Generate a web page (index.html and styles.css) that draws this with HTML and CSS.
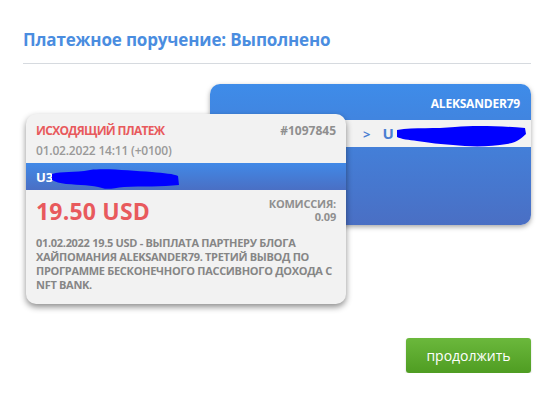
FILE: index.html
```html
<!DOCTYPE html>
<html lang="ru">
<head>
<meta charset="utf-8">
<title>Платежное поручение</title>
<link rel="stylesheet" href="styles.css">
</head>
<body>

<div id="page">
	<h1 class="page-title">Платежное поручение: Выполнено</h1>

	<div class="deck">
		<div class="card card-back">
			<div class="card-back-head">ALEKSANDER79</div>
			<div class="card-back-strip">
				<span class="arrow">&gt;</span>U
				<svg class="scribble scribble-back" width="132" height="24" viewBox="0 0 132 24">
					<path d="M2 6 C20 3 40 5 60 3 C80 1 105 2 130 4 L131 10 C126 14 124 18 112 20 C95 23 75 23 58 21 C45 20 35 19 22 17 C14 16 6 15 2 13 Z" fill="#0000ff"/>
				</svg>
			</div>
		</div>

		<div class="card card-front">
			<div class="row">
				<span class="kind">ИСХОДЯЩИЙ ПЛАТЕЖ</span>
				<span class="num">#1097845</span>
			</div>
			<div class="date">01.02.2022 14:11 (+0100)</div>
			<div class="card-bar">
				U3
				<svg class="scribble scribble-front" width="128" height="22" viewBox="0 0 128 22">
					<path d="M0 6 C10 3 22 5 38 2 C55 0 80 3 100 4 C112 5 122 6 126 8 L127 17 C110 19 90 18 72 19 C62 20 56 22 50 20 C40 17 28 17 14 16 C8 15 3 14 0 12 Z" fill="#0000ff"/>
				</svg>
			</div>
			<div class="row amount-row">
				<span class="amount">19.50 USD</span>
				<span class="fee">КОМИССИЯ:<br>0.09</span>
			</div>
			<p class="memo">01.02.2022 19.5 USD - ВЫПЛАТА ПАРТНЕРУ БЛОГА ХАЙПОМАНИЯ ALEKSANDER79. ТРЕТИЙ ВЫВОД ПО ПРОГРАММЕ БЕСКОНЕЧНОГО ПАССИВНОГО ДОХОДА С NFT BANK.</p>
		</div>
	</div>

	<div class="actions">
		<button type="button" class="btn-next">продолжить</button>
	</div>
</div>

</body>
</html>
```

FILE: styles.css
```css
html {
	font-family: "Open Sans", "Noto Sans", sans-serif;
}

body {
	margin: 0;
	background: #fff;
}

#page {
	padding: 28px 27px 0 23px;
}

.page-title {
	color: #4a8de0;
	font-size: 17px;
	font-weight: bold;
	letter-spacing: -0.15px;
	margin: 0;
	padding: 0 0 11px 0;
	border-bottom: 1px solid #d6dadf;
	line-height: 24px;
}

.deck {
	display: grid;
	margin-top: 20px;
	padding-left: 3px;
}

.card {
	grid-area: 1 / 1;
	border-radius: 10px;
}

.card-back {
	margin-left: 184px;
	width: 321px;
	height: 141px;
	background: linear-gradient(#3e8ce9, #4a6fc4);
	box-shadow: 0 2px 5px rgba(0, 0, 0, 0.35);
	overflow: hidden;
}

.card-back-head {
	color: #fff;
	font-size: 12px;
	font-weight: bold;
	text-align: right;
	padding: 11px 11px 0 0;
	height: 25px;
	letter-spacing: -0.2px;
}

.card-back-strip {
	position: relative;
	background: #f2f2f2;
	height: 27px;
	line-height: 27px;
	padding-left: 153px;
	color: #4a7fd2;
	font-size: 15px;
	font-weight: bold;
}

.arrow {
	font-size: 13px;
	margin-right: 12px;
}

.scribble {
	position: absolute;
}

.scribble-back {
	left: 185px;
	top: 4px;
}

.card-front {
	position: relative;
	z-index: 1;
	margin-top: 30px;
	width: 320px;
	height: 190px;
	background: #f2f2f2;
	box-shadow: 0 3px 6px rgba(0, 0, 0, 0.45);
	overflow: hidden;
	align-self: start;
}

.row {
	display: flex;
	justify-content: space-between;
	align-items: flex-start;
	padding: 0 10px;
}

.row:first-child {
	padding-top: 8px;
}

.kind {
	color: #e85a5d;
	font-size: 12px;
	font-weight: bold;
	letter-spacing: -0.7px;
}

.num {
	color: #8f8f8f;
	font-size: 12px;
	font-weight: bold;
}

.date {
	color: #999;
	font-size: 12px;
	font-weight: 600;
	padding: 3px 10px 0 10px;
	letter-spacing: -0.2px;
}

.card-bar {
	position: relative;
	margin-top: 4px;
	height: 27px;
	line-height: 28px;
	background: linear-gradient(#4189e7, #4a6fc4);
	color: #fff;
	font-size: 13px;
	font-weight: bold;
	padding-left: 10px;
}

.scribble-front {
	left: 26px;
	top: 5px;
}

.amount-row {
	padding-top: 5px;
}

.amount {
	color: #e85a5d;
	font-size: 23px;
	font-weight: bold;
	letter-spacing: 0.2px;
	line-height: 32px;
}

.fee {
	color: #8f8f8f;
	font-size: 11px;
	font-weight: bold;
	text-align: right;
	line-height: 13px;
	padding-top: 2px;
	letter-spacing: -0.2px;
}

.memo {
	color: #868686;
	font-size: 11px;
	font-weight: bold;
	line-height: 14px;
	margin: 9px 0 0 0;
	padding: 0 10px;
	letter-spacing: -0.3px;
}

.actions {
	display: flex;
	justify-content: flex-end;
	margin-top: 34px;
}

.btn-next {
	width: 125px;
	height: 35px;
	border: 0;
	border-radius: 3px;
	background: linear-gradient(#6bb83c, #4f9d22);
	color: #fff;
	font-family: "Open Sans", "Noto Sans", sans-serif;
	font-size: 14px;
	box-shadow: 0 1px 2px rgba(0, 0, 0, 0.2);
}
```
